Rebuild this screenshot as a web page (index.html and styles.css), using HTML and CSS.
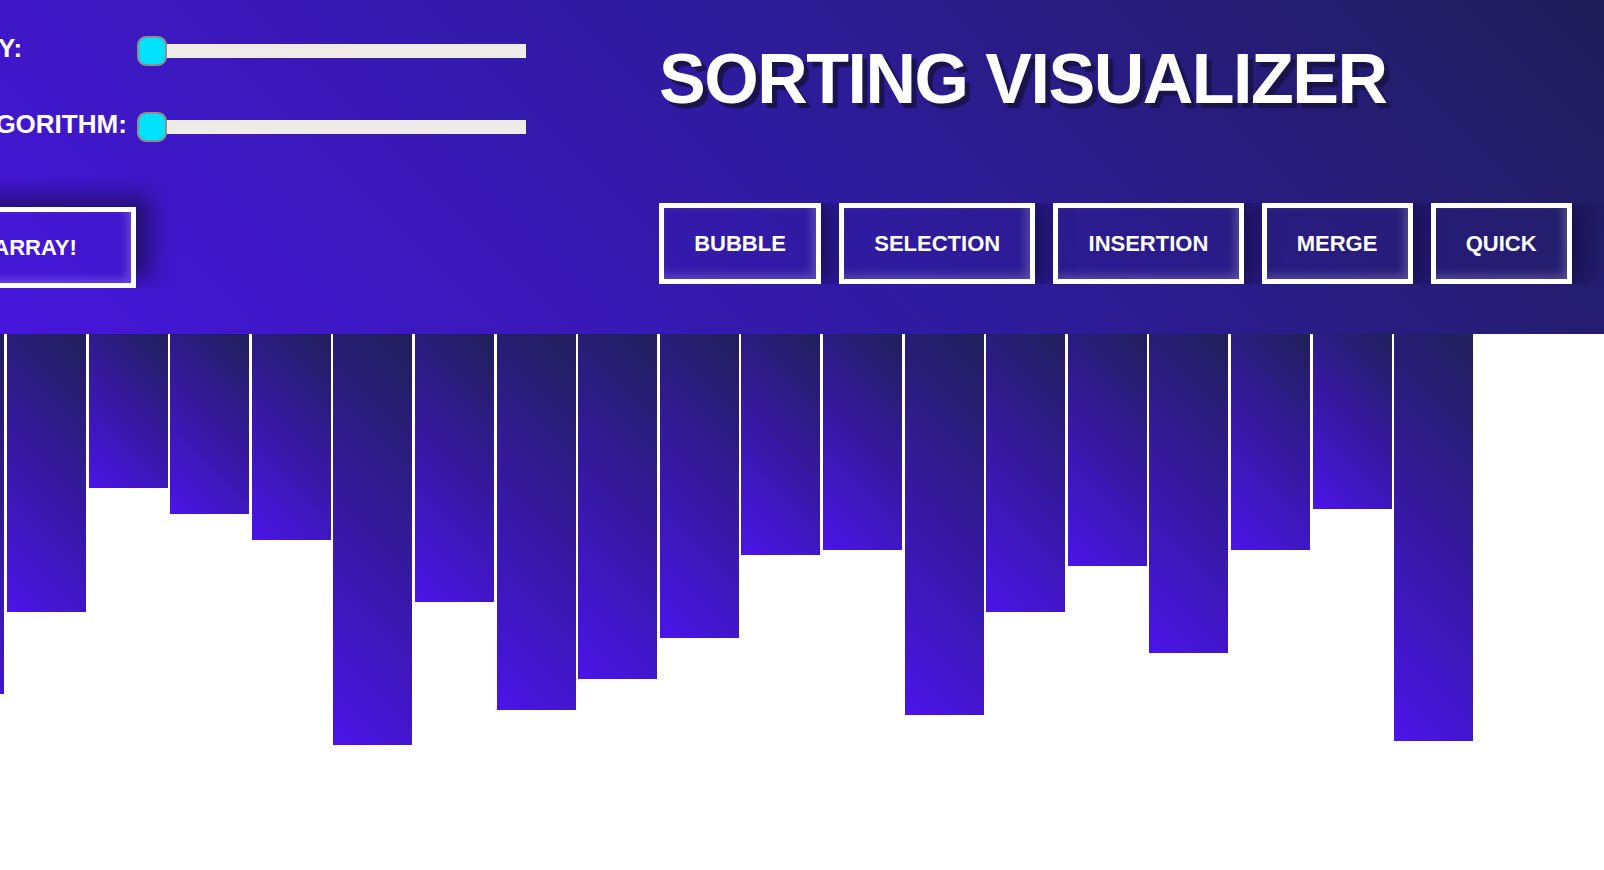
FILE: index.html
```html
<!DOCTYPE html>
<html lang="en">
<head>
<meta charset="utf-8">
<title>Sorting Visualizer</title>
<link rel="stylesheet" href="styles.css">
</head>
<body>
<header class="header">
  <section class="controls">
    <div class="fields">
      <span class="field-label field-label-size">SIZE OF ARRAY:</span>
      <div class="slider"><span class="slider-thumb"></span></div>
      <span class="field-label">SPEED OF ALGORITHM:</span>
      <div class="slider"><span class="slider-thumb"></span></div>
    </div>
    <div class="gen-wrap">
      <button class="btn btn-gen">GENERATE NEW ARRAY!</button>
    </div>
  </section>
  <section class="title-panel">
    <h1 class="title">SORTING VISUALIZER</h1>
    <nav class="algos">
      <button class="btn">BUBBLE</button>
      <button class="btn">SELECTION</button>
      <button class="btn">INSERTION</button>
      <button class="btn">MERGE</button>
      <button class="btn">QUICK</button>
    </nav>
  </section>
</header>
<main class="bars">
  <div class="bar" style="height:360px"></div>
  <div class="bar" style="height:278px"></div>
  <div class="bar" style="height:154px"></div>
  <div class="bar" style="height:180px"></div>
  <div class="bar" style="height:206px"></div>
  <div class="bar" style="height:411px"></div>
  <div class="bar" style="height:268px"></div>
  <div class="bar" style="height:376px"></div>
  <div class="bar" style="height:345px"></div>
  <div class="bar" style="height:304px"></div>
  <div class="bar" style="height:221px"></div>
  <div class="bar" style="height:216px"></div>
  <div class="bar" style="height:381px"></div>
  <div class="bar" style="height:278px"></div>
  <div class="bar" style="height:232px"></div>
  <div class="bar" style="height:319px"></div>
  <div class="bar" style="height:216px"></div>
  <div class="bar" style="height:175px"></div>
  <div class="bar" style="height:407px"></div>
</main>
</body>
</html>
```
FILE: styles.css
```css
html, body {
  margin: 0;
  padding: 0;
}

body {
  width: 1604px;
  height: 870px;
  overflow: hidden;
  background: #ffffff;
  font-family: "Liberation Sans", Arial, sans-serif;
}

.header {
  display: flex;
  height: 334px;
  background: linear-gradient(45deg, #4616dc 0%, #2f1b9f 50%, #201d58 100%);
}

.controls {
  flex: none;
  width: 659px;
}

.fields {
  display: grid;
  grid-template-columns: 314px 389px;
  grid-auto-rows: 30px;
  row-gap: 46px;
  align-items: center;
  margin-left: -177px;
  padding-top: 36px;
}

.field-label {
  color: #ffffff;
  font-weight: bold;
  font-size: 26px;
  line-height: 30px;
  margin-bottom: 6px;
  white-space: nowrap;
}

.field-label-size {
  margin-left: -5px;
}

.slider {
  position: relative;
  height: 14px;
  background: #efebe9;
}

.slider-thumb {
  position: absolute;
  left: 0;
  top: -8px;
  width: 30px;
  height: 30px;
  box-sizing: border-box;
  border: 2px solid #8d8d8d;
  border-radius: 9px;
  background: #00e1fb;
}

.gen-wrap {
  display: flex;
  overflow: hidden;
  margin-top: 35px;
  margin-left: -250px;
  padding: 30px 40px 0 0;
  width: max-content;
}

.btn {
  flex: none;
  margin: 0;
  padding: 23px 30.2px;
  border: 5px solid #ffffff;
  background: transparent;
  color: #ffffff;
  font-family: "Liberation Sans", Arial, sans-serif;
  font-weight: bold;
  font-size: 22px;
  line-height: 25px;
  box-shadow: 12px 0 20px rgba(22, 14, 72, 0.75), inset -4px -4px 8px rgba(255, 255, 255, 0.2);
}

.btn-gen {
  padding: 23px 54px 23px 55px;
  box-shadow: 14px -10px 22px rgba(22, 14, 72, 0.75), inset -4px -4px 8px rgba(255, 255, 255, 0.2);
}

.title-panel {
  flex: none;
  padding-top: 44px;
}

.title {
  margin: 0;
  color: #ffffff;
  font-size: 70px;
  line-height: 70px;
  font-weight: bold;
  letter-spacing: -1.5px;
  white-space: nowrap;
  text-shadow: 5px 5px 1px #1a134c;
}

.algos {
  display: flex;
  gap: 18px;
  margin-top: 89px;
  padding-right: 40px;
  overflow: hidden;
}

.bars {
  display: flex;
  align-items: flex-start;
  gap: 2.6px;
  margin-left: -74.6px;
}

.bar {
  flex: none;
  width: 79px;
  background: linear-gradient(45deg, #4a14e8, #201f5a);
}
```
